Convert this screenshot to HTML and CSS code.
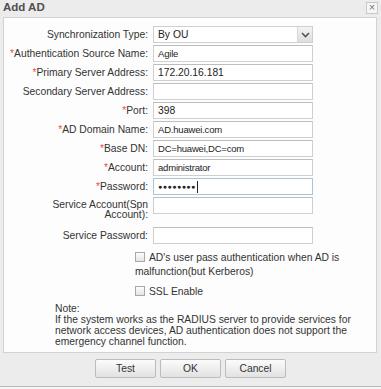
FILE: index.html
```html
<!DOCTYPE html>
<html lang="en">
<head>
    <meta charset="UTF-8">
    <meta name="viewport" content="width=device-width, initial-scale=1.0">
    <title>Add AD</title>
    <link rel="stylesheet" href="styles.css">
</head>
<body>
    <div class="dialog">
        <div class="titlebar">
            <span class="title">Add AD</span>
            <span class="close">&times;</span>
        </div>
        <div class="panel">
            <div class="form">
                <label class="lbl">Synchronization Type:</label>
                <div class="select">
                    <span>By OU</span>
                    <span class="arrow">
                        <svg width="9" height="6" viewBox="0 0 9 6"><path d="M1 1 L4.5 4.5 L8 1" fill="none" stroke="#555" stroke-width="1.6"/></svg>
                    </span>
                </div>

                <label class="lbl"><i>*</i>Authentication Source Name:</label>
                <input class="field small" type="text" value="Agile">

                <label class="lbl"><i>*</i>Primary Server Address:</label>
                <input class="field" type="text" value="172.20.16.181">

                <label class="lbl">Secondary Server Address:</label>
                <input class="field" type="text" value="">

                <label class="lbl"><i>*</i>Port:</label>
                <input class="field" type="text" value="398">

                <label class="lbl"><i>*</i>AD Domain Name:</label>
                <input class="field small" type="text" value="AD.huawei.com">

                <label class="lbl"><i>*</i>Base DN:</label>
                <input class="field small" type="text" value="DC=huawei,DC=com">

                <label class="lbl"><i>*</i>Account:</label>
                <input class="field small" type="text" value="administrator">

                <label class="lbl"><i>*</i>Password:</label>
                <div class="field focus"><span class="dots">&#9679;&#9679;&#9679;&#9679;&#9679;&#9679;&#9679;&#9679;</span><span class="caret"></span></div>

                <label class="lbl tall">Service Account(Spn Account):</label>
                <input class="field top" type="text" value="">

                <label class="lbl">Service Password:</label>
                <input class="field" type="password" value="">
            </div>

            <div class="checks">
                <div class="check"><span class="box"></span>AD's user pass authentication when AD is malfunction(but Kerberos)</div>
                <div class="check ssl"><span class="box"></span>SSL Enable</div>
            </div>

            <div class="note">
                Note:<br>
                If the system works as the RADIUS server to provide services for network access devices, AD authentication does not support the emergency channel function.
            </div>
        </div>
        <div class="footer">
            <button type="button">Test</button>
            <button type="button">OK</button>
            <button type="button">Cancel</button>
        </div>
    </div>
</body>
</html>
```

FILE: styles.css
```css
body {
    margin: 0;
    background: #f4f4f4;
    font-family: "Liberation Sans", Arial, sans-serif;
    font-size: 10.3px;
    color: #333;
}

.dialog {
    width: 381px;
    height: 386px;
    background: #ececec;
    border-bottom: 1px solid #b9b9b9;
}

.titlebar {
    height: 17px;
    position: relative;
    padding-left: 3px;
}

.title {
    font-weight: bold;
    font-size: 11.5px;
    line-height: 14px;
    color: #505050;
}

.close {
    position: absolute;
    right: 3px;
    top: 2px;
    width: 10px;
    height: 10px;
    border: 1px solid #c8c8c8;
    background: #f6f6f6;
    color: #777;
    font-size: 11px;
    line-height: 9px;
    text-align: center;
}

.panel {
    margin: 0 4px 0 3px;
    background: #fdfdfd;
    border: 1px solid #d2d2d2;
    padding: 8px 0 4px 0;
    height: 322px;
}

.form {
    display: grid;
    grid-template-columns: 146px 160px;
    column-gap: 3px;
    row-gap: 2px;
}

.lbl {
    height: 17px;
    display: flex;
    align-items: center;
    justify-content: flex-end;
    text-align: right;
    padding-right: 2px;
    white-space: nowrap;
}

.lbl i {
    font-style: normal;
    color: #e8504a;
}

.lbl.tall {
    height: 28px;
    white-space: normal;
    align-items: flex-start;
    padding-left: 40px;
    padding-top: 3px;
    line-height: 10px;
    box-sizing: border-box;
}

.field {
    box-sizing: border-box;
    width: 160px;
    height: 17px;
    margin: 0;
    padding: 0 4px;
    border: 1px solid #cfcfcf;
    border-top-color: #bdbdbd;
    background: #fff;
    font-family: "Liberation Sans", Arial, sans-serif;
    font-size: 10.3px;
    color: #222;
    outline: none;
}

.field.small {
    font-size: 9.5px;
    letter-spacing: -0.2px;
}

.field.top {
    align-self: start;
}

.field.focus {
    display: flex;
    align-items: center;
    border-color: #a9c3dc;
}

.dots {
    font-size: 7px;
    letter-spacing: 0.5px;
    color: #222;
}

.caret {
    width: 1px;
    height: 12px;
    background: #222;
    margin-left: 1px;
}

.select {
    box-sizing: border-box;
    width: 160px;
    height: 17px;
    border: 1px solid #cfcfcf;
    background: #fff;
    display: flex;
    align-items: center;
    justify-content: space-between;
    padding-left: 4px;
    color: #222;
}

.arrow {
    width: 14px;
    height: 100%;
    background: linear-gradient(#f3f3f3, #dedede);
    border-left: 1px solid #d8d8d8;
    display: flex;
    align-items: center;
    justify-content: center;
}

.checks {
    margin: 7px 0 0 131px;
    width: 210px;
    line-height: 14px;
}

.check .box {
    display: inline-block;
    box-sizing: border-box;
    width: 10px;
    height: 10px;
    border: 1px solid #a8a8a8;
    background: linear-gradient(#fdfdfd, #e4e4e4);
    margin-right: 4px;
    vertical-align: -1px;
}

.check.ssl {
    margin-top: 6px;
}

.note {
    margin: 4px 0 0 51px;
    width: 300px;
    line-height: 11px;
}

.footer {
    display: flex;
    justify-content: center;
    gap: 4px;
    padding-top: 6px;
}

button {
    width: 61px;
    height: 19px;
    padding: 0;
    border: 1px solid #bcbcbc;
    border-radius: 2px;
    background: linear-gradient(#fbfbfb, #e2e2e2);
    font-family: "Liberation Sans", Arial, sans-serif;
    font-size: 10.3px;
    color: #333;
}
```
